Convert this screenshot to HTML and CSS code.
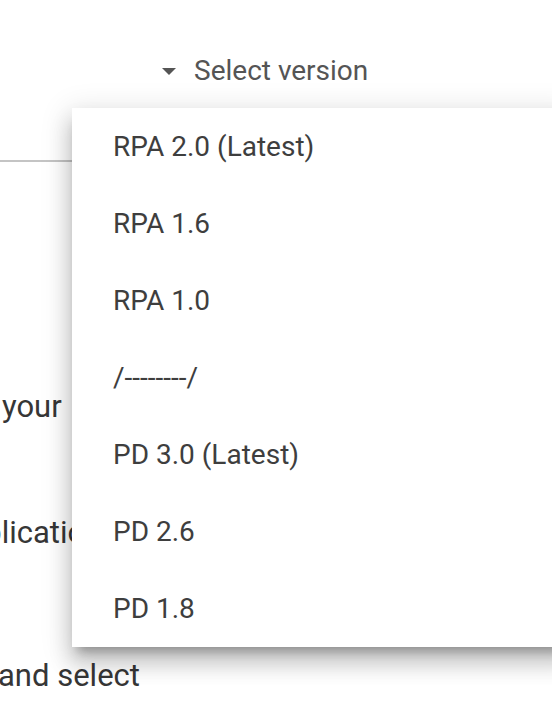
FILE: index.html
```html
<!DOCTYPE html>
<html lang="en">
<head>
  <meta charset="UTF-8">
  <meta name="viewport" content="width=device-width, initial-scale=1.0">
  <title>Select version</title>
  <link rel="stylesheet" href="styles.css">
</head>
<body>
  <header class="toolbar">
    <button class="version-btn" id="btn-version">
      <svg class="caret" width="14" height="7" viewBox="0 0 14 7"><path d="M0 0h14L7 7z" fill="#555"/></svg>
      <span>Select version</span>
    </button>
  </header>

  <main class="content">
    <div class="search-line"></div>
    <p class="line line-your">your</p>
    <p class="line line-app">application</p>
    <p class="line line-select">and select</p>
  </main>

  <ul class="menu" id="menu-version">
    <li>RPA 2.0 (Latest)</li>
    <li>RPA 1.6</li>
    <li>RPA 1.0</li>
    <li>/--------/</li>
    <li>PD 3.0 (Latest)</li>
    <li>PD 2.6</li>
    <li>PD 1.8</li>
  </ul>
</body>
</html>
```

FILE: styles.css
```css
* {
  box-sizing: border-box;
  font-family: Roboto, "Liberation Sans", sans-serif;
}

body {
  margin: 0;
  background: #fff;
  overflow: hidden;
  height: 702px;
  position: relative;
}

.toolbar {
  height: 108px;
  display: flex;
  padding-left: 162px;
  padding-top: 50px;
}

.version-btn {
  display: flex;
  align-items: center;
  gap: 18px;
  height: 40px;
  padding: 0;
  border: 0;
  background: none;
  color: #555;
  font-size: 28px;
}

.caret {
  margin-top: 2px;
}

.content {
  padding-top: 52px;
}

.search-line {
  height: 2px;
  width: 100%;
  background: #c4c4c4;
}

.line {
  margin: 0;
  font-size: 31px;
  color: #363636;
  line-height: 40px;
  white-space: nowrap;
}

.line-your {
  margin-top: 225px;
  text-indent: 2px;
}

.line-app {
  margin-top: 86px;
  text-indent: -50px;
}

.line-select {
  margin-top: 103px;
  text-indent: -2px;
}

.menu {
  position: absolute;
  top: 108px;
  left: 72px;
  width: 500px;
  margin: 0;
  padding: 0;
  list-style: none;
  background: #fff;
  box-shadow: 0 10px 10px -6px rgba(0, 0, 0, .28), 0 16px 20px 2px rgba(0, 0, 0, .16), 0 6px 28px 4px rgba(0, 0, 0, .12);
}

.menu li {
  height: 77px;
  display: flex;
  align-items: center;
  padding-left: 41px;
  font-size: 28px;
  color: #3e3e3e;
}
```
